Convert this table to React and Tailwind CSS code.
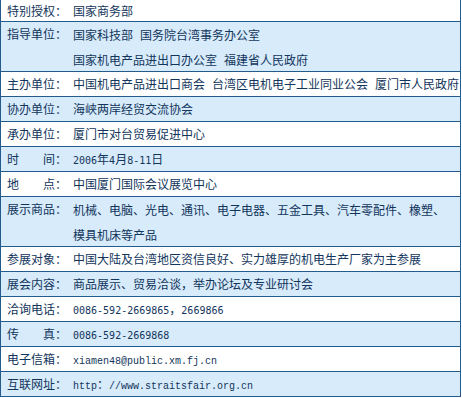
function Num({ children }) {
  return <span className="font-['DejaVu_Sans_Mono',monospace] text-[10px]">{children}</span>;
}

function Courier({ children }) {
  return <span className="font-['Liberation_Mono',monospace] text-[10px]">{children}</span>;
}

function Gap() {
  return <span className="inline-block w-[7px]" />;
}

function Row({ label, blue, tall, first, children }) {
  const h = first ? 'h-[22px]' : tall ? 'h-[50px]' : 'h-[25px]';
  return (
    <div className={`flex border-b border-[#235b8c] ${blue ? 'bg-[#d7ebfb]' : 'bg-white'} ${h}`}>
      <div className={`w-[72px] shrink-0 pl-[6px] whitespace-pre ${first ? 'leading-[21px]' : 'leading-[24px]'}`}>{label}</div>
      <div className={`flex-1 whitespace-pre ${first ? 'leading-[21px]' : tall ? 'leading-[25px]' : 'leading-[24px]'}`}>{children}</div>
    </div>
  );
}

export default function App() {
  return (
    <div className="w-[462px] h-[398px] bg-white">
      <div className="w-[461px] border-l border-r border-[#235b8c] text-[12px] text-[#12355c] font-['Noto_Sans_CJK_SC',sans-serif]">
        <Row label="特别授权：" first>国家商务部</Row>
        <Row label="指导单位：" blue tall>
          <div>国家科技部<Gap />国务院台湾事务办公室</div>
          <div>国家机电产品进出口办公室<Gap />福建省人民政府</div>
        </Row>
        <Row label="主办单位：">
          中国机电产品进出口商会<Gap />台湾区电机电子工业同业公会<Gap />厦门市人民政府
        </Row>
        <Row label="协办单位：" blue>海峡两岸经贸交流协会</Row>
        <Row label="承办单位：">厦门市对台贸易促进中心</Row>
        <Row label="时　　间：" blue>
          <Num>2006</Num>年<Num>4</Num>月<Num>8-11</Num>日
        </Row>
        <Row label="地　　点：">中国厦门国际会议展览中心</Row>
        <Row label="展示商品：" blue tall>
          <div>机械、电脑、光电、通讯、电子电器、五金工具、汽车零配件、橡塑、</div>
          <div>模具机床等产品</div>
        </Row>
        <Row label="参展对象：">中国大陆及台湾地区资信良好、实力雄厚的机电生产厂家为主参展</Row>
        <Row label="展会内容：" blue>商品展示、贸易洽谈，举办论坛及专业研讨会</Row>
        <Row label="洽询电话：">
          <Num>0086-592-2669865</Num>，<Num>2669866</Num>
        </Row>
        <Row label="传　　真：" blue>
          <Num>0086-592-2669868</Num>
        </Row>
        <Row label="电子信箱：">
          <Courier>xiamen48@public.xm.fj.cn</Courier>
        </Row>
        <Row label="互联网址：" blue>
          <Courier>http</Courier>：<Courier>//www.straitsfair.org.cn</Courier>
        </Row>
      </div>
    </div>
  );
}
